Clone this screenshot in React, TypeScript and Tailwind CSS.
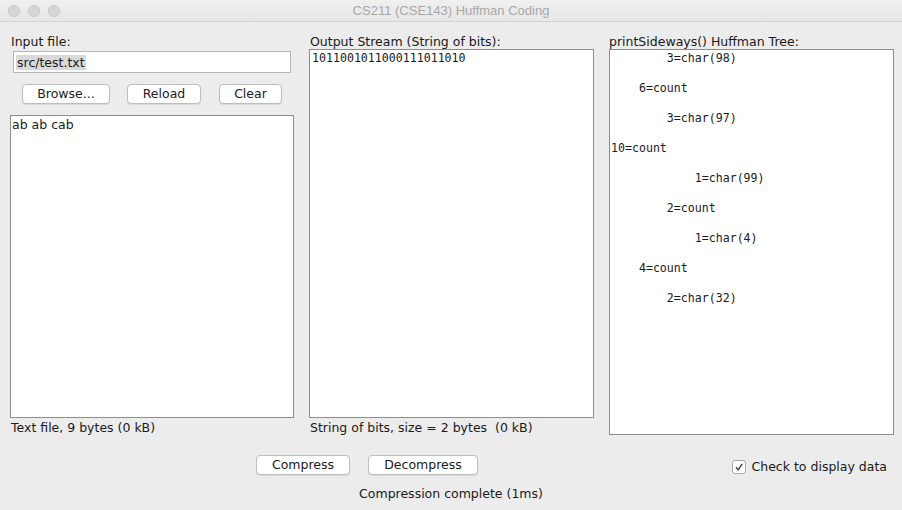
import React from "react";

const sans = { fontFamily: '"DejaVu Sans", "Noto Sans", sans-serif' };
const mono = { fontFamily: '"DejaVu Sans Mono", "Liberation Mono", monospace' };

const tree = [
  "        3=char(98)",
  "",
  "    6=count",
  "",
  "        3=char(97)",
  "",
  "10=count",
  "",
  "            1=char(99)",
  "",
  "        2=count",
  "",
  "            1=char(4)",
  "",
  "    4=count",
  "",
  "        2=char(32)",
];

function Btn({ label, w }: { label: string; w: string }) {
  return (
    <div
      className={`h-[20px] ${w} flex items-center justify-center rounded-[4px] border border-[#bdbdbd] bg-white text-[12.5px] text-[#1a1a1a] shadow-[0_1px_0_rgba(0,0,0,0.08)]`}
    >
      {label}
    </div>
  );
}

export default function App() {
  return (
    <div className="w-[902px] h-[510px] bg-[#ececec] text-[#1a1a1a] overflow-hidden" style={sans}>
      {/* title bar */}
      <div className="relative h-[22px] border-b border-[#d3d3d3] bg-gradient-to-b from-[#f0f0f0] to-[#e6e6e6] flex items-center justify-center">
        <div className="absolute left-[8px] top-[5px] flex gap-[8px]">
          <div className="w-[12px] h-[12px] rounded-full bg-[#d6d6d6] border border-[#c9c9c9]" />
          <div className="w-[12px] h-[12px] rounded-full bg-[#d6d6d6] border border-[#c9c9c9]" />
          <div className="w-[12px] h-[12px] rounded-full bg-[#d6d6d6] border border-[#c9c9c9]" />
        </div>
        <span className="text-[13px] text-[#a8a8a8]" style={{ fontFamily: '"Liberation Sans", Arial, sans-serif' }}>
          CS211 (CSE143) Huffman Coding
        </span>
      </div>

      {/* panels */}
      <div className="flex pl-[10px] pt-[11px] gap-[15px]">
        {/* left */}
        <div className="w-[284px] flex flex-col">
          <div className="h-[18px] text-[12.5px] leading-[18px] pl-[1px]">Input file:</div>
          <div className="ml-[3px] w-[278px] h-[22px] border border-[#b7b7b7] bg-white flex items-center px-[2px]">
            <span className="bg-[#d9d9d9] text-[12.5px] leading-[15px] px-[1px]">src/test.txt</span>
          </div>
          <div className="flex mt-[11px] h-[21px] ml-[12px]">
            <Btn label="Browse..." w="w-[88px]" />
            <div className="w-[17px]" />
            <Btn label="Reload" w="w-[74px]" />
            <div className="w-[18px]" />
            <Btn label="Clear" w="w-[63px]" />
          </div>
          <div className="mt-[10px] w-[284px] h-[303px] border border-[#8e8e8e] bg-white">
            <div className="text-[12.5px] leading-[16px] pl-[1px] pt-[1px]">ab ab cab</div>
          </div>
          <div className="text-[12.5px] leading-[18px] pt-[1px] pl-[1px]">Text file, 9 bytes (0 kB)</div>
        </div>

        {/* middle */}
        <div className="w-[285px] flex flex-col">
          <div className="h-[16px] text-[12.5px] leading-[18px] pl-[1px]">Output Stream (String of bits):</div>
          <div className="w-[285px] h-[369px] border border-[#8e8e8e] bg-white">
            <div className="text-[11.6px] leading-[15px] pl-[2px] pt-[1px]" style={mono}>
              1011001011000111011010
            </div>
          </div>
          <div className="text-[12.5px] leading-[18px] pt-[1px] pl-[1px] whitespace-pre">
            {"String of bits, size = 2 bytes  (0 kB)"}
          </div>
        </div>

        {/* right */}
        <div className="w-[285px] flex flex-col">
          <div className="h-[16px] text-[12.5px] leading-[18px]">printSideways() Huffman Tree:</div>
          <div className="w-[285px] h-[386px] border border-[#8e8e8e] bg-white pt-[1px] pl-[1px]">
            {tree.map((l, i) => (
              <div key={i} className="h-[15px] text-[11.6px] leading-[15px] whitespace-pre" style={mono}>
                {l}
              </div>
            ))}
          </div>
        </div>
      </div>

      {/* bottom controls */}
      <div className="relative flex mt-[18px] h-[20px] pl-[256px]">
        <div className="flex gap-[18px]">
          <Btn label="Compress" w="w-[94px]" />
          <Btn label="Decompress" w="w-[110px]" />
        </div>
        <div className="absolute right-[15px] top-[3px] flex items-center gap-[6px]">
          <div className="w-[14px] h-[14px] rounded-[3px] border border-[#a8a8a8] bg-white flex items-center justify-center">
            <svg width="10" height="10" viewBox="0 0 10 10">
              <path d="M2 5.2 L4.2 7.8 L8.2 1.8" fill="none" stroke="#333" strokeWidth="1.3" />
            </svg>
          </div>
          <span className="text-[12.5px]">Check to display data</span>
        </div>
      </div>
      <div className="text-center text-[12.5px] mt-[10px] leading-[18px]">Compression complete (1ms)</div>
    </div>
  );
}
